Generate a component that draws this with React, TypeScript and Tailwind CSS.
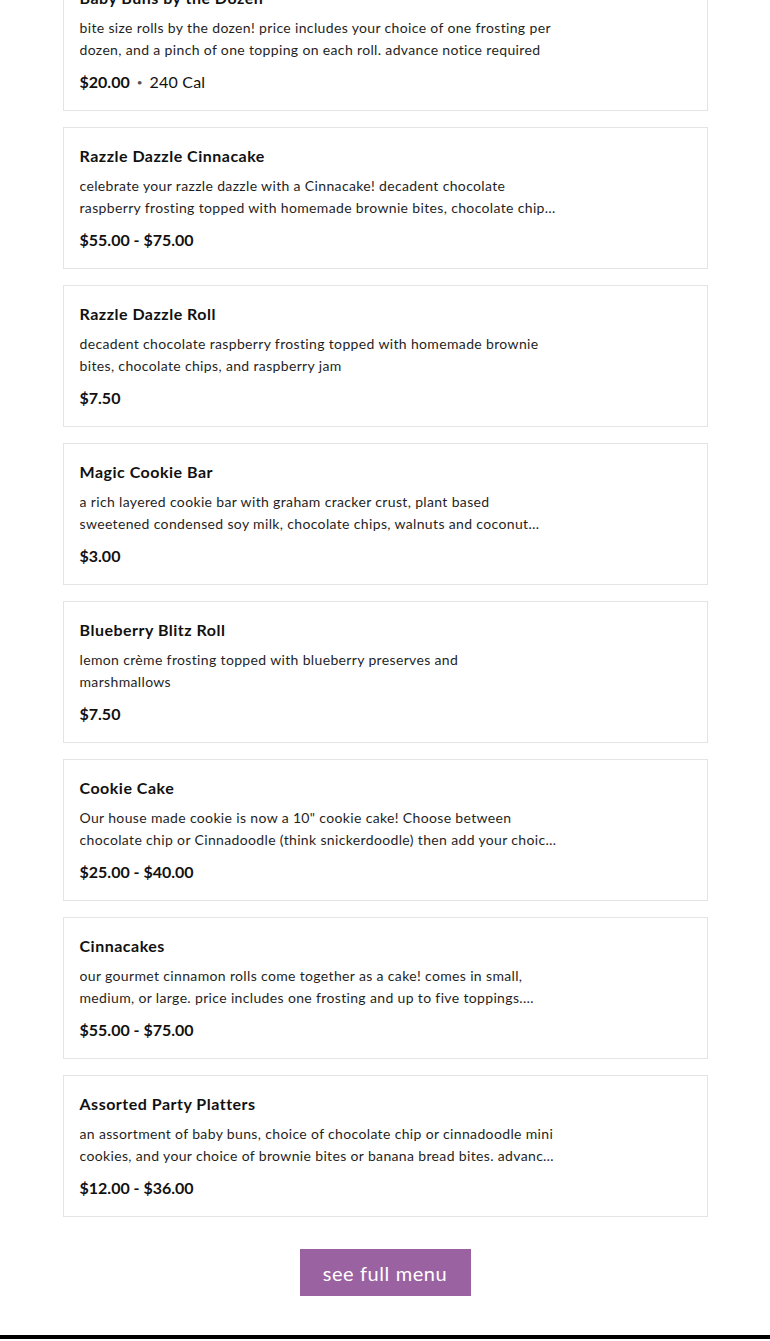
import React from "react";

type Item = {
  name: string;
  desc: string;
  price: string;
  cal?: string;
  narrow?: boolean;
};

const items: Item[] = [
  {
    name: "Baby Buns by the Dozen",
    desc: "bite size rolls by the dozen! price includes your choice of one frosting per dozen, and a pinch of one topping on each roll. advance notice required",
    price: "$20.00",
    cal: "240 Cal",
  },
  {
    name: "Razzle Dazzle Cinnacake",
    desc: "celebrate your razzle dazzle with a Cinnacake! decadent chocolate raspberry frosting topped with homemade brownie bites, chocolate chips, and raspberry jam",
    price: "$55.00 - $75.00",
  },
  {
    name: "Razzle Dazzle Roll",
    desc: "decadent chocolate raspberry frosting topped with homemade brownie bites, chocolate chips, and raspberry jam",
    price: "$7.50",
  },
  {
    name: "Magic Cookie Bar",
    desc: "a rich layered cookie bar with graham cracker crust, plant based sweetened condensed soy milk, chocolate chips, walnuts and coconut flakes",
    price: "$3.00",
  },
  {
    name: "Blueberry Blitz Roll",
    desc: "lemon crème frosting topped with blueberry preserves and marshmallows",
    price: "$7.50",
    narrow: true,
  },
  {
    name: "Cookie Cake",
    desc: 'Our house made cookie is now a 10" cookie cake! Choose between chocolate chip or Cinnadoodle (think snickerdoodle) then add your choice of frosting and toppings',
    price: "$25.00 - $40.00",
  },
  {
    name: "Cinnacakes",
    desc: "our gourmet cinnamon rolls come together as a cake! comes in small, medium, or large. price includes one frosting and up to five toppings. advance notice required",
    price: "$55.00 - $75.00",
  },
  {
    name: "Assorted Party Platters",
    desc: "an assortment of baby buns, choice of chocolate chip or cinnadoodle mini cookies, and your choice of brownie bites or banana bread bites. advance notice required",
    price: "$12.00 - $36.00",
  },
];

const MenuCard: React.FC<{ item: Item }> = ({ item }) => (
  <div className="border border-[#e4e4e4] bg-white px-4 pt-4 pb-4">
    <h3 className="text-[16px] leading-6 font-bold tracking-[0.5px] text-[#111]">{item.name}</h3>
    <p
      className={
        item.narrow
          ? "mt-[7px] w-[440px] text-[14px] leading-[22px] tracking-[0.35px] text-[#1f1f1f] line-clamp-2"
          : "mt-[7px] w-[478px] text-[14px] leading-[22px] tracking-[0.35px] text-[#1f1f1f] line-clamp-2"
      }
    >
      {item.desc}
    </p>
    <div className="mt-[9px] flex items-center text-[16px] leading-6 text-[#111]">
      <span className="font-bold">{item.price}</span>
      {item.cal && (
        <>
          <span className="mx-[7px] text-[10px] text-[#555]">•</span>
          <span className="tracking-[0.2px]">{item.cal}</span>
        </>
      )}
    </div>
  </div>
);

export default function App() {
  return (
    <div className="min-h-[1341px] bg-white font-['Lato',sans-serif] overflow-hidden">
      <div className="mx-auto w-[645px] -mt-[31px] flex flex-col gap-4">
        {items.map((it) => (
          <MenuCard key={it.name} item={it} />
        ))}
      </div>
      <div className="flex justify-center mt-8">
        <button className="w-[171px] h-[47px] bg-[#9a62a1] text-white text-[20px] tracking-[0.6px] font-['Lato',sans-serif]">
          see full menu
        </button>
      </div>
      <div className="mt-[39px] h-1 bg-black" />
    </div>
  );
}
